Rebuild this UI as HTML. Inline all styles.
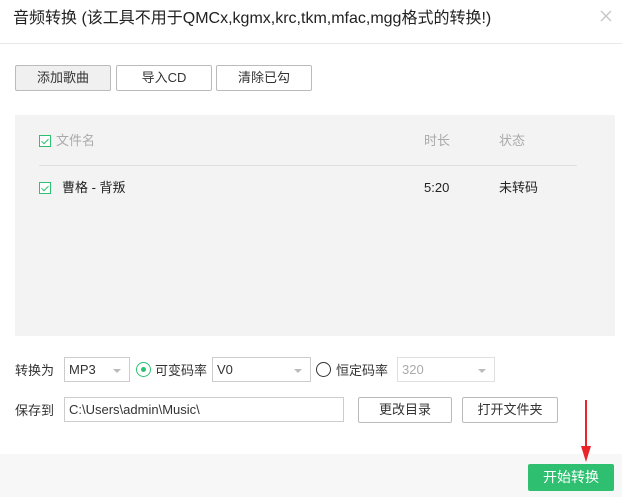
<!DOCTYPE html><html><head><meta charset="utf-8"><style>
*{box-sizing:border-box;margin:0;padding:0}
body{width:622px;height:497px;background:#fff;font-family:"Liberation Sans","Noto Sans CJK SC",sans-serif;font-size:13px;line-height:17px;color:#333;position:relative;overflow:hidden}
.a{position:absolute;white-space:nowrap}
.btn{position:absolute;border:1px solid #bbb;background:#fff;text-align:center;line-height:23px;font-size:13px;color:#333;border-radius:2px}
.sel{position:absolute;border:1px solid #ccc;background:#fff;height:25px;line-height:23px;padding-left:4px;font-size:13px}
.dd:after{content:"";position:absolute;right:8px;top:11px;border:4px solid transparent;border-top-color:#bbb}
.cb{position:absolute;width:12px;height:12px;border:1px solid #2fbf71;background:#fff}
.cb:after{content:"";position:absolute;left:3px;top:1px;width:3px;height:6px;border:solid #2fbf71;border-width:0 1px 1px 0;transform:rotate(45deg)}
.rad{position:absolute;width:15px;height:15px;border:1px solid #333;border-radius:50%;background:#fff}
</style></head><body>
<div class="a" style="left:13px;top:8px;font-size:16px;line-height:22px;color:#222">音频转换 (该工具不用于QMCx,kgmx,krc,tkm,mfac,mgg格式的转换!)</div>
<svg class="a" style="left:600px;top:10px" width="12" height="12"><path d="M1 1L11 11M11 1L1 11" stroke="#c8c8c8" stroke-width="1.5"/></svg>
<div class="a" style="left:0;top:43px;width:622px;height:1px;background:#e8e8e8"></div>
<div class="btn" style="left:15px;top:65px;width:96px;height:26px;background:#f0f0f0">添加歌曲</div>
<div class="btn" style="left:116px;top:65px;width:96px;height:26px">导入CD</div>
<div class="btn" style="left:216px;top:65px;width:96px;height:26px">清除已勾</div>
<div class="a" style="left:15px;top:115px;width:600px;height:221px;background:#f3f3f3"></div>
<div class="cb" style="left:39px;top:135px"></div>
<div class="a" style="left:56px;top:132px;color:#aaa">文件名</div>
<div class="a" style="left:424px;top:132px;color:#aaa">时长</div>
<div class="a" style="left:499px;top:132px;color:#aaa">状态</div>
<div class="a" style="left:39px;top:165px;width:538px;height:1px;background:#e0e0e0"></div>
<div class="cb" style="left:39px;top:182px"></div>
<div class="a" style="left:62px;top:179px;color:#222">曹格 - 背叛</div>
<div class="a" style="left:424px;top:179px;color:#222">5:20</div>
<div class="a" style="left:499px;top:179px;color:#222">未转码</div>
<div class="a" style="left:15px;top:362px">转换为</div>
<div class="sel dd" style="left:64px;top:357px;width:66px">MP3</div>
<div class="rad" style="left:136px;top:362px;border-color:#2fbf71"><div class="a" style="left:4px;top:4px;width:5px;height:5px;border-radius:50%;background:#2fbf71"></div></div>
<div class="a" style="left:155px;top:362px">可变码率</div>
<div class="sel dd" style="left:212px;top:357px;width:99px">V0</div>
<div class="rad" style="left:316px;top:362px"></div>
<div class="a" style="left:336px;top:362px">恒定码率</div>
<div class="sel dd" style="left:397px;top:357px;width:98px;color:#aaa;border-color:#e0e0e0">320</div>
<div class="a" style="left:15px;top:402px">保存到</div>
<div class="sel" style="left:64px;top:397px;width:280px;padding-left:4px">C:\Users\admin\Music\</div>
<div class="btn" style="left:358px;top:397px;width:94px;height:26px">更改目录</div>
<div class="btn" style="left:462px;top:397px;width:96px;height:26px">打开文件夹</div>
<div class="a" style="left:0;top:454px;width:622px;height:43px;background:#f7f7f7"></div>
<div class="a" style="left:528px;top:464px;width:86px;height:27px;background:#2fbf71;border-radius:2px;color:#fff;text-align:center;line-height:27px;font-size:14px">开始转换</div>
<svg class="a" style="left:578px;top:398px" width="16" height="66"><line x1="8" y1="2" x2="8" y2="50" stroke="#e8262a" stroke-width="2"/><polygon points="3,48 13,48 8,64" fill="#e8262a"/></svg>
</body></html>
